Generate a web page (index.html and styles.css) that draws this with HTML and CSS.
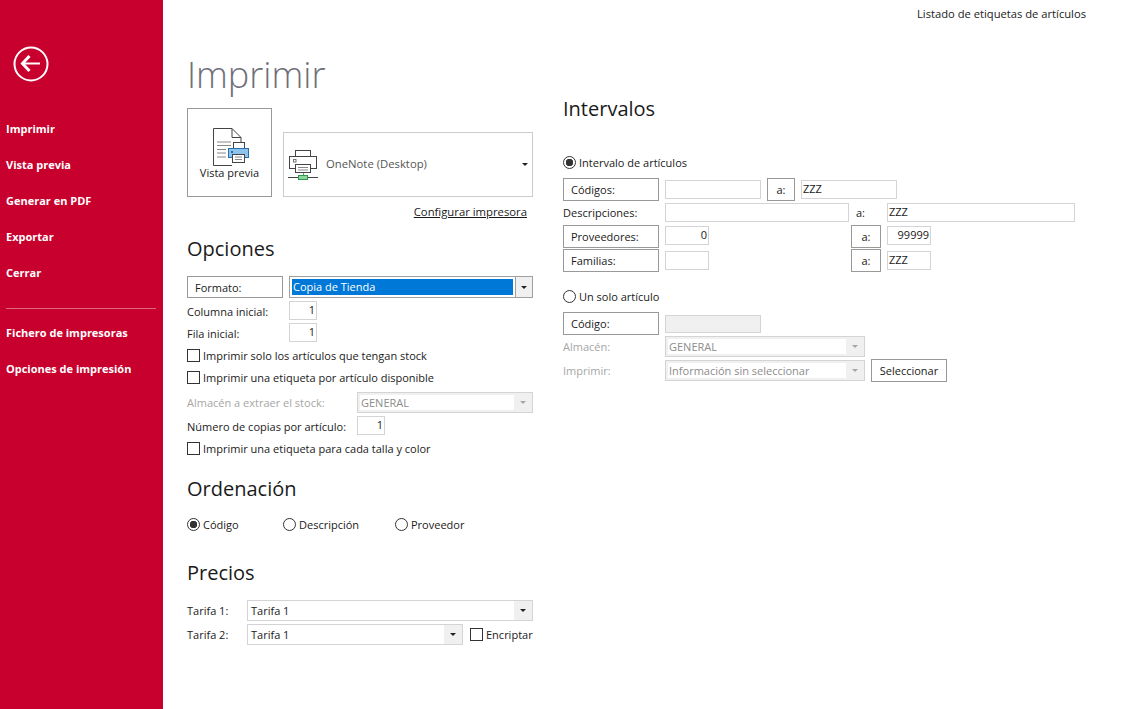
FILE: index.html
```html
<!DOCTYPE html>
<html lang="es">
<head>
  <meta charset="UTF-8" />
  <title>Listado de etiquetas de artículos</title>
  <link rel="stylesheet" href="styles.css">
</head>
<body>

<!-- Side menu -->
  <div class="sidebar">
    <svg class="back" width="36" height="36" viewBox="0 0 36 36">
      <circle cx="18" cy="18" r="16.5" fill="none" stroke="#fff" stroke-width="2"/>
      <path d="M9 17.500H27" stroke="#fff" stroke-width="2" fill="none"/>
      <path d="M16.500 10L9.500 17.500L16.500 25" stroke="#fff" stroke-width="3" fill="none"/>
    </svg>
    <div class="menu">
      <div class="menu-item">Imprimir</div>
      <div class="menu-item">Vista previa</div>
      <div class="menu-item">Generar en PDF</div>
      <div class="menu-item">Exportar</div>
      <div class="menu-item">Cerrar</div>
    </div>
    <div class="menu-sep"></div>
    <div class="menu">
      <div class="menu-item">Fichero de impresoras</div>
      <div class="menu-item">Opciones de impresión</div>
    </div>
  </div>

  <div class="main">
    <div class="title-bar">Listado de etiquetas de artículos</div>
    <div class="columns">

      <div class="col-left">
        <h1>Imprimir</h1>
        <div class="print-row">
          <div class="preview-btn">
            <svg class="preview-icon" width="36" height="38" viewBox="0 0 36 38">
              <path d="M19 37.500H0.500V0.500H19L28 9.500V14M19 0.500V9.500H28" fill="#fff" stroke="#444"/>
              <path d="M4 14H18M4 17.500H18M4 21.500H13M4 25H13M4 29H13" stroke="#888" fill="none"/>
              <rect x="20.500" y="14.500" width="11" height="6" fill="#fff" stroke="#444"/>
              <rect x="15.500" y="20.500" width="20" height="9" fill="#8cc4ee" stroke="#2a6fa8"/>
              <rect x="18" y="23" width="2" height="2" fill="#2a6fa8"/>
              <rect x="19.500" y="26.500" width="12" height="8" fill="#fff" stroke="#444"/>
              <path d="M22 29H29M22 31.500H29" stroke="#888" fill="none"/>
            </svg>
            <span>Vista previa</span>
          </div>
          <div class="printer-select">
            <svg width="30" height="30" viewBox="0 0 30 30">
              <rect x="7.500" y="0.500" width="15" height="6" fill="#fff" stroke="#444"/>
              <rect x="1.500" y="6.500" width="27" height="12" fill="#fff" stroke="#444"/>
              <rect x="5.500" y="9.500" width="2.500" height="2.500" fill="none" stroke="#777"/>
              <rect x="7.500" y="14.500" width="15" height="8" fill="#fff" stroke="#444"/>
              <path d="M10 17.500H20M10 20H20" stroke="#888" fill="none"/>
              <path d="M15.500 23V26" stroke="#888"/>
              <path d="M0 27.500H30" stroke="#444"/>
              <rect x="10.500" y="25.500" width="9" height="4" fill="#8ed49c" stroke="#2a9a48"/>
            </svg>
            <span class="printer-name">OneNote (Desktop)</span>
            <span class="arrow small"></span>
          </div>
        </div>
        <div class="config-row"><a class="config">Configurar impresora</a></div>

        <h2 class="h-opciones">Opciones</h2>
        <div class="row row-formato">
          <div class="label-box">Formato:</div>
          <div class="select select-dark fill">
            <span class="sel-text selected">Copia de Tienda</span>
            <span class="sel-btn"><span class="arrow"></span></span>
          </div>
        </div>
        <div class="row row-field"><span class="lbl w102">Columna inicial:</span><div class="input num w28">1</div></div>
        <div class="row row-field"><span class="lbl w102">Fila inicial:</span><div class="input num w28">1</div></div>
        <div class="row row-check"><span class="check"></span>Imprimir solo los artículos que tengan stock</div>
        <div class="row row-check"><span class="check"></span>Imprimir una etiqueta por artículo disponible</div>
        <div class="row row-store">
          <span class="lbl w170 muted">Almacén a extraer el stock:</span>
          <div class="select disabled fill">
            <span class="sel-text">GENERAL</span>
            <span class="sel-btn"><span class="arrow"></span></span>
          </div>
        </div>
        <div class="row row-field"><span class="lbl w170">Número de copias por artículo:</span><div class="input num w28">1</div></div>
        <div class="row row-check"><span class="check"></span>Imprimir una etiqueta para cada talla y color</div>

        <h2 class="h-orden">Ordenación</h2>
        <div class="row radios">
          <div class="radio-item w96"><span class="radio on"></span>Código</div>
          <div class="radio-item w112"><span class="radio"></span>Descripción</div>
          <div class="radio-item"><span class="radio"></span>Proveedor</div>
        </div>

        <h2 class="h-precios">Precios</h2>
        <div class="row row-tarifa">
          <span class="lbl w60">Tarifa 1:</span>
          <div class="select fill">
            <span class="sel-text">Tarifa 1</span>
            <span class="sel-btn"><span class="arrow"></span></span>
          </div>
        </div>
        <div class="row row-tarifa">
          <span class="lbl w60">Tarifa 2:</span>
          <div class="select w216">
            <span class="sel-text">Tarifa 1</span>
            <span class="sel-btn"><span class="arrow"></span></span>
          </div>
          <span class="check ml7"></span>Encriptar
        </div>
      </div>

      <div class="col-right">
        <h2 class="h-intervalos">Intervalos</h2>
        <div class="row radio-line first"><span class="radio on"></span>Intervalo de artículos</div>

        <div class="row range range-first">
          <div class="label-box">Códigos:</div>
          <div class="input w96"></div>
          <div class="a-box">a:</div>
          <div class="input w96 text">ZZZ</div>
        </div>
        <div class="row range tall">
          <span class="lbl w96">Descripciones:</span>
          <div class="input w184"></div>
          <span class="a-plain">a:</span>
          <div class="input w188 text">ZZZ</div>
        </div>
        <div class="row range tall top">
          <div class="label-box">Proveedores:</div>
          <div class="input w44 num">0</div>
          <div class="a-box wide">a:</div>
          <div class="input w44 num">99999</div>
        </div>
        <div class="row range">
          <div class="label-box">Familias:</div>
          <div class="input w44"></div>
          <div class="a-box wide">a:</div>
          <div class="input w44 text">ZZZ</div>
        </div>

        <div class="row radio-line second"><span class="radio"></span>Un solo artículo</div>
        <div class="row range range-code">
          <div class="label-box">Código:</div>
          <div class="input w96 grey"></div>
        </div>
        <div class="row row-single">
          <span class="lbl w102 muted">Almacén:</span>
          <div class="select disabled w200">
            <span class="sel-text">GENERAL</span>
            <span class="sel-btn"><span class="arrow"></span></span>
          </div>
        </div>
        <div class="row row-single">
          <span class="lbl w102 muted">Imprimir:</span>
          <div class="select disabled w200">
            <span class="sel-text">Información sin seleccionar</span>
            <span class="sel-btn"><span class="arrow"></span></span>
          </div>
          <div class="btn">Seleccionar</div>
        </div>
      </div>

    </div>
  </div>

</body>
</html>
```

FILE: styles.css
```css
* {
  box-sizing: border-box;
}
body {
  margin: 0;
  height: 709px;
  display: flex;
  overflow: hidden;
  background: #fff;
  color: #1a1a1a;
  font-family: "Open Sans", "Noto Sans", sans-serif;
  font-size: 11px;
}

/* side menu */
.sidebar {
  width: 163px;
  flex-shrink: 0;
  background: #c8002d;
  color: #fff;
  padding-top: 46px;
}
.back {
  display: block;
  margin-left: 13px;
}
.menu {
  display: flex;
  flex-direction: column;
}
.sidebar > .menu:nth-of-type(1) {
  margin-top: 29px;
}
.menu-item {
  height: 36px;
  line-height: 36px;
  padding-left: 6px;
  font-weight: 700;
  font-size: 11px;
}
.menu-sep {
  height: 1px;
  margin: 17px 7px 6px 6px;
  background: #e0667f;
}

/* main area */
.main {
  flex: 1;
  padding-left: 24px;
}
.title-bar {
  height: 28px;
  padding-top: 6px;
  padding-right: 50px;
  text-align: right;
  font-size: 11.2px;
}
.columns {
  display: flex;
}
.col-left {
  width: 346px;
}
.col-right {
  width: 512px;
  margin-left: 30px;
}
h1 {
  margin: 21px 0 0;
  height: 59px;
  font-size: 36px;
  line-height: 52px;
  font-weight: 300;
  color: #6f6f7a;
}
h2 {
  margin: 0;
  font-size: 20px;
  line-height: 28px;
  font-weight: 400;
  color: #1a1a1a;
}
.h-opciones { margin-top: 8px; }
.h-orden { margin-top: 16px; }
.h-precios { margin-top: 25px; }
.h-intervalos { margin-top: 67px; }

.row {
  display: flex;
  align-items: center;
}

/* printer row */
.print-row {
  display: flex;
  align-items: flex-end;
}
.preview-btn {
  width: 85px;
  height: 89px;
  border: 1px solid #999;
  display: flex;
  flex-direction: column;
  align-items: center;
  padding-top: 19px;
}
.preview-icon {
  margin-left: 3px;
}
.preview-btn span {
  margin-top: -1px;
}
.printer-select {
  width: 250px;
  height: 65px;
  margin-left: 11px;
  border: 1px solid #ccc;
  display: flex;
  align-items: center;
  padding: 0 4px;
}
.printer-name {
  margin-left: 8px;
  margin-top: -3px;
  font-size: 11.3px;
  color: #555;
}
.printer-select .arrow {
  margin-left: auto;
}
.config-row {
  height: 30px;
  padding-top: 7px;
  padding-right: 6px;
  text-align: right;
}
.config {
  font-size: 11.3px;
  text-decoration: underline;
}

/* form controls */
.label-box {
  width: 96px;
  height: 23px;
  line-height: 22px;
  border: 1px solid #999;
  padding-left: 7px;
  flex-shrink: 0;
}
.lbl {
  flex-shrink: 0;
}
.muted {
  color: #a6a6a6;
}
.w60 { width: 60px; }
.w102 { width: 102px; }
.w170 { width: 170px; }
.w28 { width: 28px; }
.w44 { width: 44px; }
.w96 { width: 96px; }
.w112 { width: 112px; }
.w184 { width: 184px; }
.w188 { width: 188px; }
.w200 { width: 200px; }
.w216 { width: 216px; }
.fill { flex: 1; }
.ml7 { margin-left: 7px; }

.input {
  height: 19px;
  line-height: 15px;
  border: 1px solid #d4d4d4;
  background: #fff;
  padding: 0 1px;
  flex-shrink: 0;
}
.input.num {
  text-align: right;
}
.input.grey {
  height: 18px;
  background: #f0f0f0;
}

.select {
  height: 21px;
  border: 1px solid #d4d4d4;
  display: flex;
  align-items: stretch;
  padding: 2px 0 2px 2px;
}
.select-dark {
  height: 22px;
  border-color: #a0a0a0;
}
.sel-text {
  flex: 1;
  line-height: 15px;
  padding-left: 1px;
}
.selected {
  background: #0078d7;
  color: #fff;
}
.sel-btn {
  width: 18px;
  margin: -2px 0;
  background: #f0f0f0;
  display: flex;
  align-items: center;
  justify-content: center;
}
.select-dark .sel-btn {
  width: 17px;
  margin-left: 2px;
  border-left: 1px solid #a0a0a0;
}
.arrow {
  width: 0;
  height: 0;
  border-left: 3px solid transparent;
  border-right: 3px solid transparent;
  border-top: 3px solid #222;
}
.disabled {
  background: #f0f0f0;
  color: #8c8c8c;
}
.disabled .sel-text {
  background: #fff;
}
.disabled .arrow {
  border-top-color: #a6a6a6;
}

.check {
  width: 13px;
  height: 13px;
  margin-right: 3px;
  border: 1px solid #333;
  flex-shrink: 0;
  background: #fff;
}
.radio {
  width: 13px;
  height: 13px;
  margin-right: 3px;
  border: 1px solid #333;
  border-radius: 50%;
  flex-shrink: 0;
  background: #fff;
}
.radio.on {
  background: radial-gradient(circle, #333 0 3.5px, #fff 4px);
}
.radio-item {
  display: flex;
  align-items: center;
}

/* left column rows */
.row-formato {
  margin-top: 13px;
  height: 22px;
  gap: 6px;
}
.row-formato .label-box {
  height: 22px;
  line-height: 21px;
}
.row-field {
  height: 22px;
  align-items: flex-end;
}
.row-field .lbl {
  margin-bottom: 1px;
}
.row-check {
  height: 21px;
  margin-bottom: 1px;
}
.row-field + .row-check {
  margin-top: 3px;
}
.row-store {
  height: 21px;
  margin-top: 4px;
}
.radios {
  height: 19px;
  margin-top: 12px;
  margin-bottom: 1px;
}
.row-tarifa {
  height: 23px;
  margin-bottom: 1px;
}
.h-precios + .row-tarifa {
  margin-top: 12px;
}

/* right column rows */
.radio-line {
  height: 17px;
  margin-bottom: 1px;
}
.radio-line.first {
  margin-top: 31px;
}
.radio-line.second {
  margin-top: 16px;
}
.range {
  height: 23px;
  gap: 6px;
}
.range.tall {
  height: 23px;
  margin-bottom: 1px;
}
.range.top {
  align-items: flex-start;
}
.range.top .input {
  margin-top: 1px;
}
.range-first,
.range-code {
  margin-top: 7px;
}
.a-box {
  width: 28px;
  height: 23px;
  line-height: 22px;
  border: 1px solid #999;
  text-align: center;
  flex-shrink: 0;
}
.a-box.wide {
  width: 30px;
  margin-left: 136px;
}
.a-plain {
  width: 26px;
  padding-left: 1px;
}
.row-single {
  height: 23px;
  margin-bottom: 1px;
}
.btn {
  width: 76px;
  height: 23px;
  line-height: 22px;
  margin-left: 6px;
  border: 1px solid #999;
  text-align: center;
}
```
